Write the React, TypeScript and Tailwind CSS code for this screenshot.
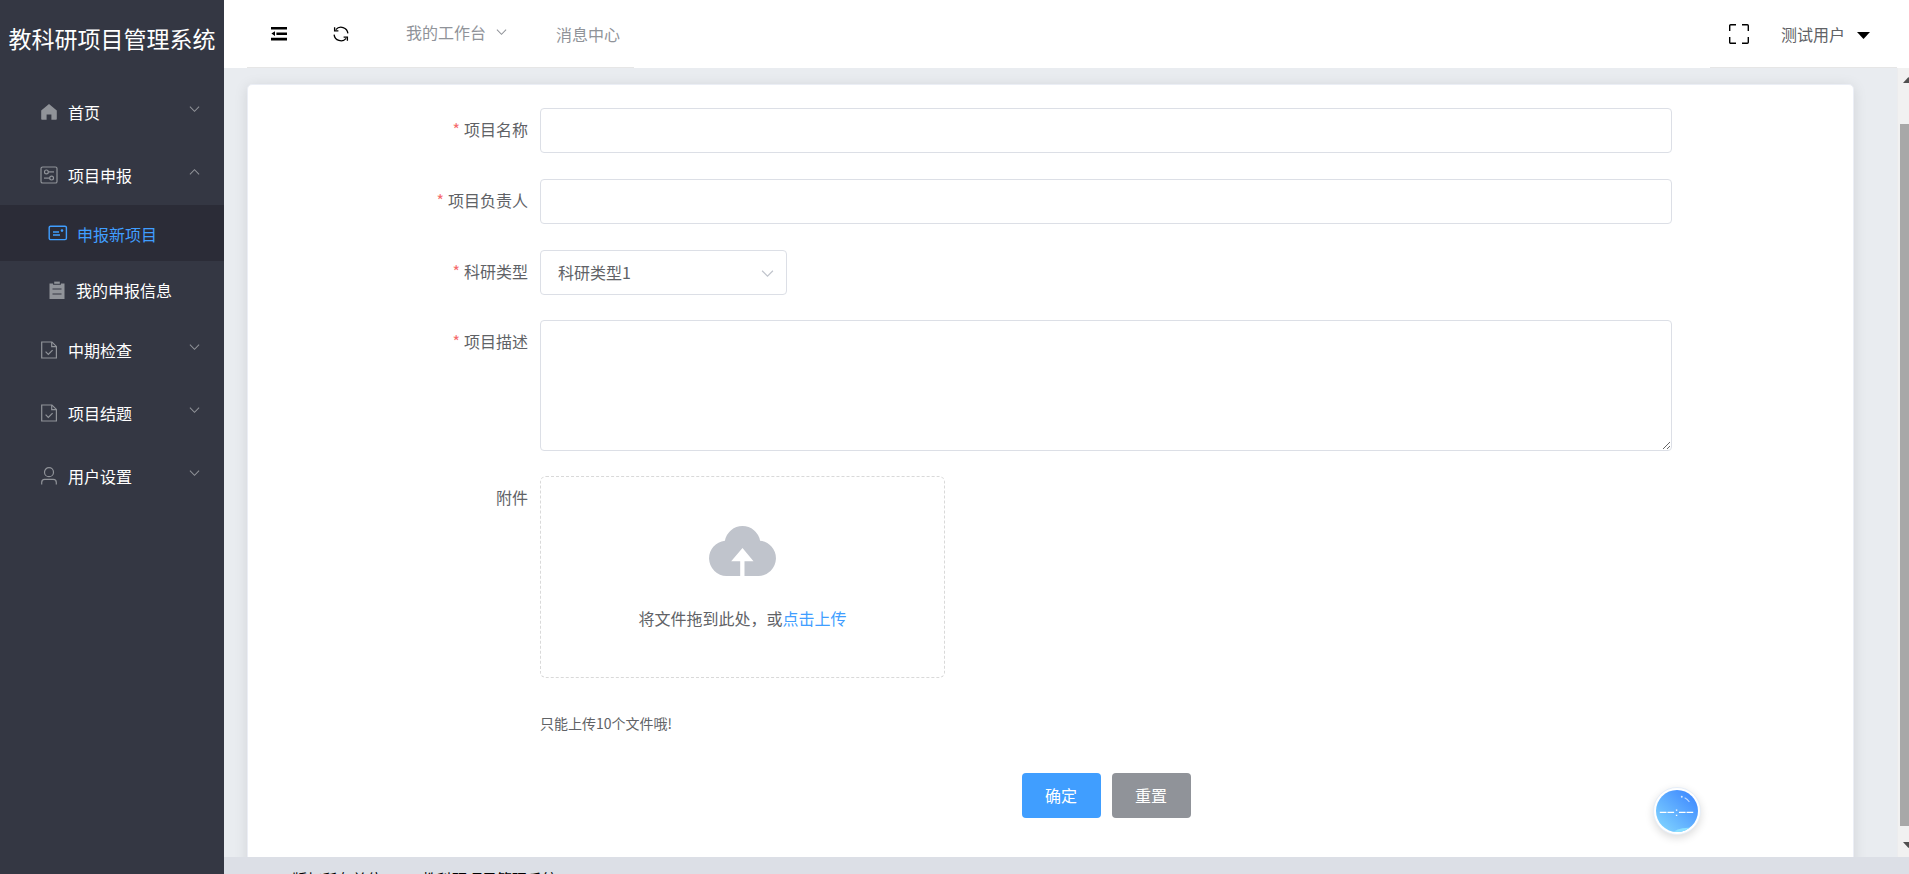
import type { ReactNode } from "react";

type IconProps = { className?: string };

function Chevron({ up = false, className = "" }: IconProps & { up?: boolean }) {
  return (
    <svg className={className} viewBox="0 0 12 8" fill="none" stroke="currentColor" strokeWidth="1.1" aria-hidden="true">
      <path d={up ? "M1 6.5 6 1.5 11 6.5" : "M1 1.5 6 6.5 11 1.5"} />
    </svg>
  );
}

function HomeIcon() {
  return (
    <svg className="size-[18px]" viewBox="0 0 18 18" fill="currentColor" aria-hidden="true">
      <path d="M9 1 1.2 7.6V16a.8.8 0 0 0 .8.8h4.6v-5.4h4.8v5.4H16a.8.8 0 0 0 .8-.8V7.6z" />
    </svg>
  );
}

function OperationIcon() {
  return (
    <svg className="size-[18px]" viewBox="0 0 18 18" fill="none" stroke="currentColor" strokeWidth="1.2" aria-hidden="true">
      <rect x="1" y="1" width="16" height="16" rx="1.6" />
      <circle cx="6.4" cy="5.9" r="1.9" />
      <path d="M8.3 5.9H14" />
      <circle cx="11.6" cy="12.1" r="1.9" />
      <path d="M4 12.1h5.7" />
    </svg>
  );
}

function PostcardIcon() {
  return (
    <svg className="h-[16px] w-[20px]" viewBox="0 0 20 16" fill="none" stroke="currentColor" strokeWidth="1.4" aria-hidden="true">
      <rect x="1.2" y="1.2" width="17.2" height="13.4" rx="1.4" />
      <path d="M5 7h6M5 10h7" />
      <circle cx="14" cy="5.6" r="1.3" fill="currentColor" stroke="none" />
    </svg>
  );
}

function ClipboardIcon() {
  return (
    <svg className="h-[18px] w-[20px]" viewBox="0 0 20 18" aria-hidden="true">
      <path fill="currentColor" d="M2.5 2.4h3.600v1.400h7.800V2.400H17.500V18H2.500z" />
      <path fill="currentColor" d="M7.200 0.600h5.600v2.200H7.200z" />
      <path stroke="#343743" strokeWidth="1" d="M5.500 8h9M5.500 13h9" />
    </svg>
  );
}

function DocumentCheckedIcon() {
  return (
    <svg className="size-[18px]" viewBox="0 0 18 18" fill="none" stroke="currentColor" strokeWidth="1.2" aria-hidden="true">
      <path d="M1.7 1h10.2l4.5 4.4V17H1.7z" />
      <path d="M11.7 1v4.7h4.7M5.6 10.7l2.7 2.7 4.3-4.3" />
    </svg>
  );
}

function UserIcon() {
  return (
    <svg className="size-[18px]" viewBox="0 0 18 18" fill="none" stroke="currentColor" strokeWidth="1.2" aria-hidden="true">
      <circle cx="9" cy="5.2" r="4.5" />
      <path d="M1.7 17.6v-2.2a3 3 0 0 1 3-3h8.6a3 3 0 0 1 3 3v2.2" />
    </svg>
  );
}

function FoldIcon() {
  return (
    <svg className="h-[14px] w-[16px]" viewBox="0 0 16 14" fill="black" aria-hidden="true">
      <path d="M0 0h16v2.6H0zM5.4 5.4H16v2.5H5.4zM0 10.8h16v2.6H0zM.4 6.6 4 4.2v4.9z" />
    </svg>
  );
}

function RefreshIcon() {
  return (
    <svg className="size-[16px]" viewBox="0 0 16 16" fill="none" stroke="black" strokeWidth="1.3" aria-hidden="true">
      <path d="M2.8 3.6A6.9 6.9 0 0 1 14.9 7.4M13.2 12.4A6.9 6.9 0 0 1 1.1 8.6" />
      <path d="M1.6 1.2v3.6h3.8M14.4 14.8v-3.6h-3.8" />
    </svg>
  );
}

function FullScreenIcon() {
  return (
    <svg className="size-[20px]" viewBox="0 0 20 20" fill="none" stroke="black" strokeWidth="1.4" aria-hidden="true">
      <path d="M.7 7V1.7a1 1 0 0 1 1-1H7M13 .7h5.3a1 1 0 0 1 1 1V7M19.3 13v5.3a1 1 0 0 1-1 1H13M7 19.3H1.7a1 1 0 0 1-1-1V13" />
    </svg>
  );
}

function CloudUploadIcon() {
  return (
    <svg className="h-[50px] w-[67px]" viewBox="0 0 67 50" aria-hidden="true">
      <path
        fill="#c0c4cc"
        d="M31.2 50V35.2h-9L33.5 22l11 13.2h-9V50H49.5a17.7 17.7 0 0 0 1.6-35.3 17.9 17.9 0 0 0-35.2 0A17.7 17.7 0 0 0 17.5 50z"
      />
    </svg>
  );
}

function MenuItem({ icon, label, open = false }: { icon: ReactNode; label: string; open?: boolean }) {
  return (
    <button type="button" className="flex h-[63px] w-full items-center pr-6 pl-10 text-left text-white">
      <span className="mt-[2px] text-[#909399]">{icon}</span>
      <span className="mt-[3px] ml-[10px] flex-1">{label}</span>
      <Chevron up={open} className="mb-[4px] h-[8px] w-[11px] text-[#909399]" />
    </button>
  );
}

function SubItem({ icon, label, active = false }: { icon: ReactNode; label: string; active?: boolean }) {
  return (
    <a
      href="#"
      className={
        active
          ? "flex h-14 items-center gap-[9px] bg-[#2b2c37] pl-[48px] text-[#409eff]"
          : "flex h-14 items-center gap-[9px] pl-[47px] text-white"
      }
    >
      <span className={active ? "" : "mt-px text-[#909399]"}>{icon}</span>
      <span className="mt-[2px]">{label}</span>
    </a>
  );
}

function Field({ id, label, required = true, children }: { id: string; label: string; required?: boolean; children: ReactNode }) {
  return (
    <div className="flex items-start">
      <label htmlFor={id} className="w-[112px] shrink-0 pr-[12px] text-right leading-[43px]">
        {required && <span className="mr-1 text-[#f56c6c]">*</span>}
        {label}
      </label>
      <div className="min-w-0 flex-1">{children}</div>
    </div>
  );
}

function ClockBall() {
  return (
    <button
      type="button"
      aria-label="计时"
      className="absolute right-[208px] bottom-[39px] size-[48px] rounded-full border border-[#e6eef8] bg-white p-[2px] shadow-[0_3px_8px_rgba(0,0,0,0.14)]"
    >
      <svg viewBox="0 0 44 44" className="size-full" aria-hidden="true">
        <defs>
          <linearGradient id="ball" x1="0.15" y1="0.9" x2="0.85" y2="0.15">
            <stop offset="0" stopColor="#7ccfff" />
            <stop offset="1" stopColor="#438eff" />
          </linearGradient>
          <clipPath id="ball-clip">
            <circle cx="22" cy="22" r="22" />
          </clipPath>
        </defs>
        <circle cx="22" cy="22" r="22" fill="url(#ball)" />
        <g clipPath="url(#ball-clip)">
          <ellipse cx="34" cy="46" rx="16" ry="6.5" fill="#8be0ff" />
        </g>
        <path d="M30 8.2q3 1.4 5 4.4" stroke="white" strokeOpacity="0.65" strokeWidth="1.1" fill="none" />
        <circle cx="27" cy="7" r="1" fill="white" fillOpacity="0.8" />
        <path d="M4 23.5h7M12 23.5h7M24 23.5h7M32 23.5h7M20.8 21h1.5M20.8 26.5h1.5" stroke="white" strokeWidth="1.3" />
      </svg>
    </button>
  );
}

const inputStyle = "block w-full rounded-[4px] border border-[#dcdfe6] bg-white px-[17px] outline-none focus:border-[#409eff]";

export default function App() {
  return (
    <div className="relative flex h-screen overflow-hidden bg-[#e9ecf0] font-['Noto_Sans_CJK_SC',sans-serif] text-[16px] leading-6 text-[#606266]">
      <aside className="w-[224px] shrink-0 bg-[#343743]">
        <h1 className="flex h-[79px] items-center justify-center pb-[3px] text-[23px] whitespace-nowrap text-white">教科研项目管理系统</h1>
        <nav>
          <MenuItem icon={<HomeIcon />} label="首页" />
          <MenuItem icon={<OperationIcon />} label="项目申报" open />
          <SubItem icon={<PostcardIcon />} label="申报新项目" active />
          <SubItem icon={<ClipboardIcon />} label="我的申报信息" />
          <MenuItem icon={<DocumentCheckedIcon />} label="中期检查" />
          <MenuItem icon={<DocumentCheckedIcon />} label="项目结题" />
          <MenuItem icon={<UserIcon />} label="用户设置" />
        </nav>
      </aside>

      <div className="flex min-w-0 flex-1 flex-col">
        <header className="flex h-[68px] shrink-0 justify-between bg-white pr-[12px] pl-[23px]">
          <nav className="flex items-center border-b border-[#e6e6e6] pr-[14px] pl-6 text-[#909399]">
            <button type="button" aria-label="收起菜单">
              <FoldIcon />
            </button>
            <button type="button" aria-label="刷新" className="ml-[46px]">
              <RefreshIcon />
            </button>
            <a href="#" className="mb-[3px] ml-[57px] flex items-center gap-[10px]">
              我的工作台
              <Chevron className="h-[8px] w-[11px]" />
            </a>
            <a href="#" className="ml-[49px]">
              消息中心
            </a>
          </nav>
          <div className="flex items-center border-b border-[#e6e6e6] pr-[27px] pl-[19px]">
            <button type="button" aria-label="全屏">
              <FullScreenIcon />
            </button>
            <button type="button" className="ml-[32px] flex items-center gap-[12px]">
              测试用户
              <svg className="mt-[3px] h-[7px] w-[13px]" viewBox="0 0 13 7" aria-hidden="true">
                <path d="M0 0h13L6.5 7z" />
              </svg>
            </button>
          </div>
        </header>

        <div className="flex min-h-0 flex-1 overflow-hidden">
          <main className="min-w-0 flex-1 pt-4 pr-[43px] pl-[23px]">
            <form
              className="flex flex-col rounded-[5px] border border-[#ebeef5] bg-white pt-[23px] pr-[181px] pb-[60px] pl-[180px] shadow-[0_2px_14px_rgba(0,0,0,0.1)]"
              onSubmit={(e) => e.preventDefault()}
            >
              <div className="flex flex-col gap-[25px]">
                <div className="flex flex-col gap-[26px]">
                  <Field id="name" label="项目名称">
                    <input id="name" type="text" className={`${inputStyle} h-[45px]`} />
                  </Field>
                  <Field id="leader" label="项目负责人">
                    <input id="leader" type="text" className={`${inputStyle} h-[45px]`} />
                  </Field>
                  <Field id="kind" label="科研类型">
                    <div className="relative w-[247px]">
                      <select id="kind" className={`${inputStyle} h-[45px] appearance-none pb-[2px]`}>
                        <option>科研类型1</option>
                      </select>
                      <Chevron className="pointer-events-none absolute top-[19px] right-[13px] h-[9px] w-[13px] text-[#c0c4cc]" />
                    </div>
                  </Field>
                </div>
                <Field id="desc" label="项目描述">
                  <textarea id="desc" className={`${inputStyle} h-[131px] resize-y`} />
                </Field>
                <Field id="files" label="附件" required={false}>
                  <label
                    htmlFor="files"
                    className="flex h-[202px] w-[405px] cursor-pointer flex-col items-center rounded-[6px] border border-dashed border-[#d9d9d9] pt-[49px]"
                  >
                    <CloudUploadIcon />
                    <span className="mt-[30px]">
                      将文件拖到此处，或<em className="text-[#409eff] not-italic">点击上传</em>
                    </span>
                    <input id="files" type="file" multiple className="sr-only" />
                  </label>
                  <p className="mt-[33px] text-[14px]">只能上传10个文件哦!</p>
                </Field>
              </div>
              <div className="mt-[38px] flex justify-center gap-[11px] pl-[112px] text-white">
                <button type="submit" className="h-[45px] w-[79px] rounded-[4px] bg-[#409eff] pb-[2px]">
                  确定
                </button>
                <button type="reset" className="h-[45px] w-[79px] rounded-[4px] bg-[#909399] pb-[2px]">
                  重置
                </button>
              </div>
            </form>
          </main>

          <div className="flex w-[12px] shrink-0 flex-col overflow-hidden border-l border-[#ececee] bg-[#f1f1f1] py-[9px]" aria-hidden="true">
            <svg className="ml-[5px] h-[6px] w-[11px] shrink-0" viewBox="0 0 11 6">
              <path fill="#505050" d="M0 6 5.5 0 11 6z" />
            </svg>
            <div className="mt-[41px] mb-[16px] ml-[2px] w-[15px] flex-1 bg-[#a8a8a8]" />
            <svg className="ml-[5px] h-[6px] w-[11px] shrink-0" viewBox="0 0 11 6">
              <path fill="#505050" d="M0 0h11L5.5 6z" />
            </svg>
          </div>
        </div>

        <footer className="flex h-[17px] shrink-0 gap-[40px] overflow-hidden bg-[#dcdfe6] pt-[12px] pl-[68px] text-[15px] leading-5 text-black">
          <span>版权所有单位</span>
          <span>教科研项目管理系统</span>
        </footer>
      </div>

      <ClockBall />
    </div>
  );
}
